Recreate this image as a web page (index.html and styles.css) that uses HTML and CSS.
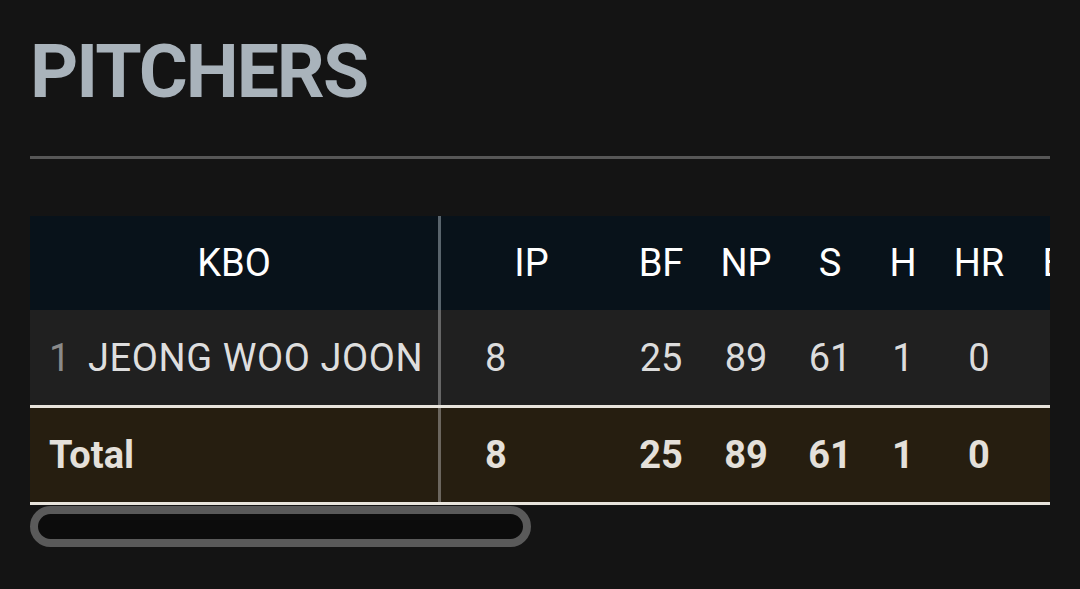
FILE: index.html
```html
<!DOCTYPE html>
<html lang="en">
<head>
<meta charset="utf-8">
<title>Pitchers</title>
<link rel="stylesheet" href="styles.css">
</head>
<body>
<main class="page">
  <h1 class="title">PITCHERS</h1>
  <div class="rule"></div>
  <div class="table">
    <div class="row head">
      <div class="cell name-col">KBO</div>
      <div class="cell c-ip">IP</div>
      <div class="cell c-bf">BF</div>
      <div class="cell c-np">NP</div>
      <div class="cell c-s">S</div>
      <div class="cell c-h">H</div>
      <div class="cell c-hr">HR</div>
      <div class="cell c-er">ER</div>
    </div>
    <div class="row body">
      <div class="cell name-col left"><span class="idx">1</span><span class="pname">JEONG WOO JOON</span></div>
      <div class="cell c-ip ipval">8</div>
      <div class="cell c-bf">25</div>
      <div class="cell c-np">89</div>
      <div class="cell c-s">61</div>
      <div class="cell c-h">1</div>
      <div class="cell c-hr">0</div>
      <div class="cell c-er"></div>
    </div>
    <div class="row total">
      <div class="cell name-col left"><span class="tlabel">Total</span></div>
      <div class="cell c-ip ipval">8</div>
      <div class="cell c-bf">25</div>
      <div class="cell c-np">89</div>
      <div class="cell c-s">61</div>
      <div class="cell c-h">1</div>
      <div class="cell c-hr">0</div>
      <div class="cell c-er"></div>
    </div>
  </div>
  <div class="scroll-thumb"></div>
</main>
</body>
</html>
```
FILE: styles.css
```css
html, body {
  margin: 0;
  padding: 0;
  background: #141414;
}
body {
  font-family: Roboto, "Noto Sans", "Liberation Sans", sans-serif;
}
.page {
  padding: 0 30px;
}
.title {
  margin: 0;
  padding-top: 34px;
  font-size: 75px;
  line-height: 75px;
  font-weight: 700;
  color: #a9b3bb;
  letter-spacing: -2px;
}
.rule {
  height: 3px;
  background: #575757;
  margin-top: 47px;
}
.table {
  margin-top: 57px;
  width: 1020px;
  overflow: hidden;
}
.row {
  display: flex;
  align-items: stretch;
  font-size: 38px;
}
.cell {
  flex: none;
  display: flex;
  align-items: center;
  justify-content: center;
  box-sizing: border-box;
  white-space: nowrap;
}
.head {
  height: 94px;
  background: #08121a;
  color: #ffffff;
}
.body {
  height: 98px;
  background: #202020;
  color: #dcdcdc;
  border-bottom: 3px solid #e8e4dc;
  box-sizing: border-box;
}
.total {
  height: 97px;
  background: #261e10;
  color: #e4e0da;
  font-weight: 700;
  border-bottom: 3px solid #e8e4dc;
  box-sizing: border-box;
}
.name-col {
  width: 411px;
  border-right: 3px solid #666666;
}
.head .name-col {
  border-right-color: #59646c;
}
.total .name-col {
  border-right-color: #6b665e;
}
.left {
  justify-content: flex-start;
  padding-left: 19px;
}
.idx {
  display: inline-block;
  width: 39px;
  color: #8a8a8a;
  font-weight: 400;
}
.pname {
  color: #dedede;
  letter-spacing: 0.6px;
}
.c-ip { width: 181px; }
.c-bf { width: 78px; }
.c-np { width: 92px; }
.c-s  { width: 76px; }
.c-h  { width: 70px; }
.c-hr { width: 82px; }
.c-er { width: 90px; }
.ipval {
  justify-content: flex-start;
  padding-left: 44px;
}
.scroll-thumb {
  margin-top: 1px;
  width: 501px;
  height: 41px;
  box-sizing: border-box;
  border: 8px solid #5a5a5a;
  border-radius: 21px;
  background: #0c0c0c;
}
```
